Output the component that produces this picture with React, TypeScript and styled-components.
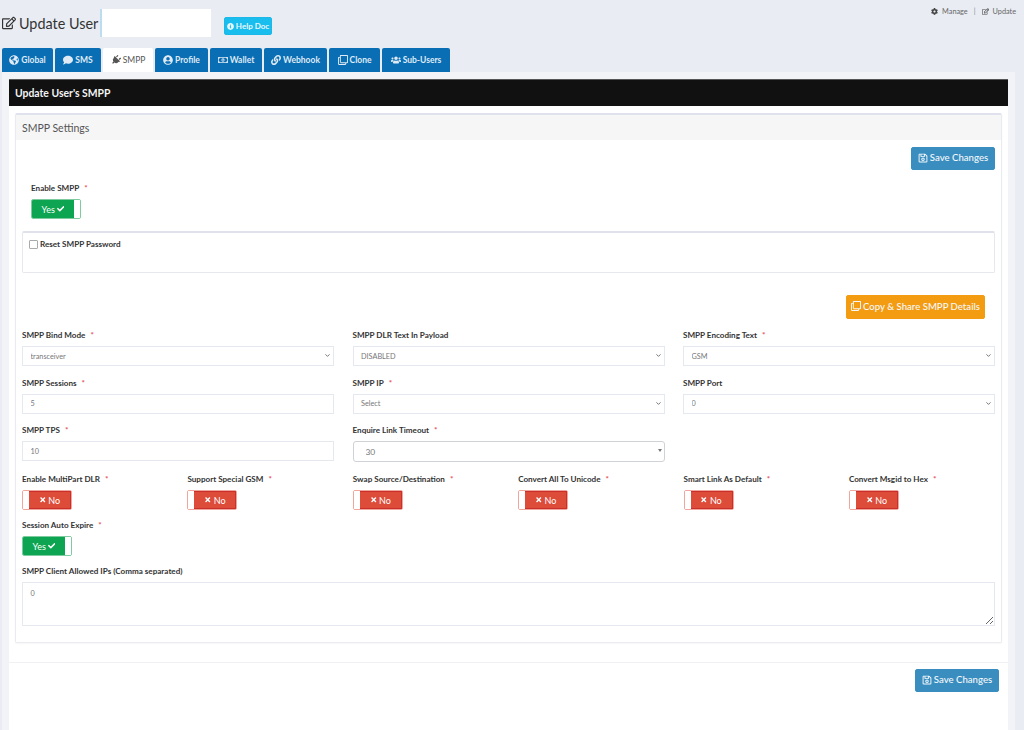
import React from "react";
import styled, { createGlobalStyle } from "styled-components";
import {
  FaCheck, FaCog, FaComment, FaGlobeAmericas, FaInfoCircle, FaLink, FaPlug, FaRegClone,
  FaRegEdit, FaRegMoneyBillAlt, FaRegSave, FaTimes, FaUserCircle, FaUsers,
} from "react-icons/fa";
import { ChevronDown } from "lucide-react";

const FONT = `"Lato", "Noto Sans", sans-serif`;

const Global = createGlobalStyle`
  html, body { margin: 0; padding: 0; height: 730px; overflow: hidden; background: #e9edf3; }
  * { box-sizing: border-box; }
  body { font-family: ${FONT}; color: #333; }
`;

const Page = styled.div`
  width: 1024px; height: 730px; overflow: hidden; display: flex; flex-direction: column;
`;
const TopBar = styled.header`
  height: 48px; display: flex; align-items: flex-start; justify-content: space-between; padding: 9px 8px 0 2px;
`;
const TitleGroup = styled.div`display: flex; align-items: flex-start;`;
const Title = styled.h1`
  margin: 0; width: 98px; height: 28px; display: flex; align-items: center; gap: 3px; font-size: 14.4px; font-weight: 400; color: #333; white-space: nowrap;
  svg { width: 14px; height: 14px; flex: none; }
`;
const Redacted = styled.div`
  width: 109px; height: 28px; background: #fff; margin-left: 2px; box-shadow: -2px 0 0 #bcdcf0;
`;
const HelpButton = styled.button`
  margin: 8px 0 0 13px; width: 48px; height: 18px; padding: 0; border: 1px solid #1cb9e8; border-radius: 2px; background: #19bdee;
  color: #e8f8fd; font: 700 8px ${FONT}; display: flex; align-items: center; justify-content: center; gap: 2px;
  svg { width: 7px; height: 7px; }
`;
const Crumbs = styled.nav`
  display: flex; align-items: center; height: 7px; margin-top: -1px; font-size: 7.3px; color: #666;
  svg { width: 7px; height: 7px; margin-right: 4px; color: #444; }
`;
const CrumbSep = styled.span`margin: 0 6px; color: #888;`;
const Tabs = styled.div`display: flex; gap: 2px; padding-left: 2px; height: 24px;`;
const Tab = styled.div<{ $active?: boolean; $w: number }>`
  width: ${p => p.$w}px; height: 24px; border-radius: 2px 2px 0 0; display: flex; align-items: center; justify-content: center; gap: 2px;
  font-size: 8.5px; font-weight: ${p => (p.$active ? 400 : 700)};
  background: ${p => (p.$active ? "#fff" : "#0a6eb4")}; color: ${p => (p.$active ? "#555" : "#dfeaf4")};
  svg { width: 10px; height: 10px; }
`;
const PlugIcon = styled(FaPlug)`transform: rotate(45deg);`;
const Shell = styled.main`
  flex: 1; width: 1013px; margin-left: 2px; padding: 7px 7px 0; background: #f1f3f7;
`;
const Inner = styled.div`height: 100%; background: #fff; display: flex; flex-direction: column;`;
const BlackBar = styled.div`
  height: 27px; background: #111; color: #f4f4f4; display: flex; align-items: center; padding-left: 6px;
  font-size: 10.4px; font-weight: 700; border-top: 1px solid #555;
`;
const Portlet = styled.section`
  margin: 7px 6px 0; height: 530px; border: 1px solid #e9ebf0; border-top: 2px solid #dfe2ec; border-radius: 2px; background: #fff;
  box-shadow: 0 1px 2px rgba(0,0,0,.04);
`;
const PortletHead = styled.div`
  height: 25px; background: #f6f6f7; display: flex; align-items: center; padding-left: 6px; font-size: 10.5px; color: #555;
`;
const PortletBody = styled.div`padding: 7px 6px 0 6px;`;
const ActionRow = styled.div<{ $right?: number; $h: number }>`
  display: flex; justify-content: flex-end; height: ${p => p.$h}px; padding-right: ${p => p.$right ?? 0}px;
`;
const Btn = styled.button<{ $bg: string; $w: number; $h: number }>`
  width: ${p => p.$w}px; height: ${p => p.$h}px; background: ${p => p.$bg}; color: #f5f8fb; border: 1px solid ${p => p.$bg};
  border-radius: 2px; padding: 0 0 2px; display: flex; align-items: center; justify-content: center; gap: 2px;
  font: 500 9.6px ${FONT};
  svg { width: 10px; height: 10px; }
`;
const EnableBlock = styled.div`margin: 11px 0 0 9px; height: 50px;`;
const Label = styled.label`
  display: block; height: 14px; line-height: 14px; font-size: 8.1px; font-weight: 700; color: #333; white-space: nowrap;
`;
const Req = styled.span`color: #e7505a; margin-left: 5px;`;
const Toggle = styled.div<{ $on?: boolean }>`
  margin-top: 4px; width: 50px; height: 20px; display: flex; flex-direction: ${p => (p.$on ? "row" : "row-reverse")};
  border-radius: 2px; overflow: hidden; border: 1px solid ${p => (p.$on ? "#7fcba0" : "#f0a69c")};
`;
const ToggleFace = styled.div<{ $on?: boolean }>`
  flex: 1; background: ${p => (p.$on ? "#0da551" : "#dd4b39")}; color: #fff; font-size: 9px; display: flex; align-items: center; justify-content: center; gap: 2px;
  border-right: ${p => (p.$on ? "0" : "1px solid #c9302c")};
  border-bottom: ${p => (p.$on ? "0" : "1px solid #c9302c")};
  border-top: ${p => (p.$on ? "0" : "1px solid #c9302c")};
  svg { width: 7.5px; height: 7.5px; }
`;
const Knob = styled.div`width: 6px; background: #fff;`;
const ResetBox = styled.div`
  height: 42px; margin-top: 0; border: 1px solid #e6e8ee; border-top: 2px solid #dfe2ea; border-radius: 2px; padding: 6px 6px;
  display: flex; align-items: flex-start; gap: 2px; font-size: 8.1px; font-weight: 700; color: #333;
`;
const Check = styled.span`
  width: 9px; height: 9px; border: 1px solid #aaa; border-radius: 1px; background: #fff; margin-top: 1px;
`;
const CopyWrap = styled.div`margin-top: 22px;`;
const Grid3 = styled.div`
  margin-top: 9px; display: grid; grid-template-columns: repeat(3, 312px); column-gap: 18.5px; row-gap: 9.5px;
`;
const Field = styled.div`min-width: 0;`;
const ControlWrap = styled.div`position: relative; margin-top: 4px;`;
const SelectEl = styled.select`
  display: block; width: 100%; height: 20px; appearance: none; background: #fff; border: 1px solid #e6e8f0; border-radius: 0;
  padding: 0 7.5px; font: 400 7.3px ${FONT}; color: #777;
`;
const Caret = styled(ChevronDown)`
  position: absolute; right: 3px; top: 6px; width: 7px; height: 7px; color: #444; pointer-events: none;
`;
const InputEl = styled.input`
  display: block; width: 100%; height: 20px; background: #fff; border: 1px solid #e6e8f0; padding: 0 7.5px;
  font: 400 7.3px ${FONT}; color: #777;
`;
const NativeSelect = styled.select`
  display: block; width: 100%; height: 21px; appearance: none; background: #fff; border: 1px solid #cfd2d6; border-radius: 3px;
  padding: 0 12px; font: 400 8.4px ${FONT}; color: #777;
`;
const NativeArrow = styled.span`
  position: absolute; right: 3px; top: 8px; border: 2.5px solid transparent; border-top: 3px solid #777;
`;
const Grid6 = styled.div`
  margin-top: 10px; display: grid; grid-template-columns: repeat(6, 165.4px); row-gap: 8px;
`;
const TextareaEl = styled.textarea`
  display: block; width: 100%; height: 44px; resize: both; background: #fff; border: 1px solid #e6e8f0; padding: 6px 7.5px;
  font: 400 7.3px ${FONT}; color: #777; outline: none;
`;
const AllowedField = styled.div`margin-top: 8px;`;
const Footer = styled.footer`
  margin-top: 19px; border-top: 1px solid #f1f1f3; padding: 6px 9px 0 0; display: flex; justify-content: flex-end;
`;

const SelectField = ({ label, req, value }: { label: string; req?: boolean; value: string }) => (
  <Field>
    <Label>{label}{req && <Req>*</Req>}</Label>
    <ControlWrap>
      <SelectEl defaultValue={value}><option>{value}</option></SelectEl>
      <Caret strokeWidth={2.5} />
    </ControlWrap>
  </Field>
);
const InputField = ({ label, value }: { label: string; value: string }) => (
  <Field>
    <Label>{label}<Req>*</Req></Label>
    <ControlWrap><InputEl defaultValue={value} /></ControlWrap>
  </Field>
);
const Switch = ({ on }: { on?: boolean }) => (
  <Toggle $on={on}>
    <ToggleFace $on={on}>{on ? <>Yes <FaCheck /></> : <><FaTimes /> No</>}</ToggleFace>
    <Knob />
  </Toggle>
);
const SwitchField = ({ label, on }: { label: string; on?: boolean }) => (
  <Field>
    <Label>{label}<Req>*</Req></Label>
    <Switch on={on} />
  </Field>
);

const tabs: [string, React.ReactNode, number, boolean?][] = [
  ["Global", <FaGlobeAmericas />, 51],
  ["SMS", <FaComment />, 46],
  ["SMPP", <PlugIcon />, 50, true],
  ["Profile", <FaUserCircle />, 53],
  ["Wallet", <FaRegMoneyBillAlt />, 52],
  ["Webhook", <FaLink />, 63],
  ["Clone", <FaRegClone />, 51],
  ["Sub-Users", <FaUsers />, 68],
];
const switches = ["Enable MultiPart DLR", "Support Special GSM", "Swap Source/Destination", "Convert All To Unicode", "Smart Link As Default", "Convert Msgid to Hex"];

export default function App() {
  return (
    <Page>
      <Global />
      <TopBar>
        <TitleGroup>
          <Title><FaRegEdit /> Update User</Title>
          <Redacted />
          <HelpButton><FaInfoCircle /> Help Doc</HelpButton>
        </TitleGroup>
        <Crumbs>
          <FaCog /> Manage <CrumbSep>|</CrumbSep> <FaRegEdit /> Update
        </Crumbs>
      </TopBar>
      <Tabs>
        {tabs.map(([name, icon, w, active]) => (
          <Tab key={name} $w={w} $active={active}>{icon} {name}</Tab>
        ))}
      </Tabs>
      <Shell>
        <Inner>
          <BlackBar>Update User's SMPP</BlackBar>
          <Portlet>
            <PortletHead>SMPP Settings</PortletHead>
            <PortletBody>
              <ActionRow $h={23}>
                <Btn $bg="#3a8ebf" $w={84} $h={23}><FaRegSave /> Save Changes</Btn>
              </ActionRow>
              <EnableBlock>
                <Label>Enable SMPP<Req>*</Req></Label>
                <Switch on />
              </EnableBlock>
              <ResetBox><Check /> Reset SMPP Password</ResetBox>
              <CopyWrap>
                <ActionRow $h={24} $right={10}>
                  <Btn $bg="#f39c12" $w={139} $h={24}><FaRegClone /> Copy &amp; Share SMPP Details</Btn>
                </ActionRow>
              </CopyWrap>
              <Grid3>
                <SelectField label="SMPP Bind Mode" req value="transceiver" />
                <SelectField label="SMPP DLR Text In Payload" value="DISABLED" />
                <SelectField label="SMPP Encoding Text" req value="GSM" />
                <InputField label="SMPP Sessions" value="5" />
                <SelectField label="SMPP IP" req value="Select" />
                <SelectField label="SMPP Port" value="0" />
                <InputField label="SMPP TPS" value="10" />
                <Field>
                  <Label>Enquire Link Timeout<Req>*</Req></Label>
                  <ControlWrap>
                    <NativeSelect defaultValue="30"><option>30</option></NativeSelect>
                    <NativeArrow />
                  </ControlWrap>
                </Field>
              </Grid3>
              <Grid6>
                {switches.map(s => <SwitchField key={s} label={s} />)}
                <SwitchField label="Session Auto Expire" on />
              </Grid6>
              <AllowedField>
                <Label>SMPP Client Allowed IPs (Comma separated)</Label>
                <ControlWrap><TextareaEl defaultValue="0" /></ControlWrap>
              </AllowedField>
            </PortletBody>
          </Portlet>
          <Footer>
            <Btn $bg="#3a8ebf" $w={84} $h={23}><FaRegSave /> Save Changes</Btn>
          </Footer>
        </Inner>
      </Shell>
    </Page>
  );
}
